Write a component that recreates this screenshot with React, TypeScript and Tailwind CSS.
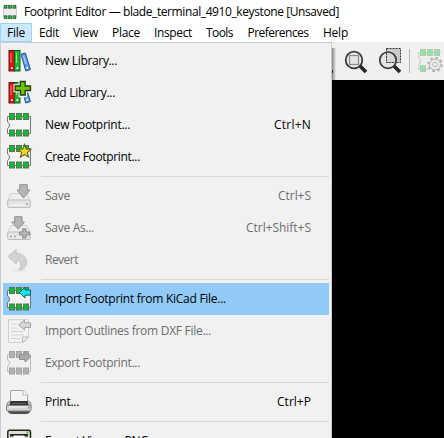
import { useLayoutEffect, useRef, useState, type ReactNode } from "react";

/** Text whose tracking is adjusted so that it spans a given width. */
function Fit({ text, width }: { text: string; width: number }) {
  const ref = useRef<HTMLSpanElement>(null);
  const [spacing, setSpacing] = useState(0);
  useLayoutEffect(() => {
    const el = ref.current;
    if (!el) return;
    setSpacing((width - el.getBoundingClientRect().width) / text.length);
  }, [text, width]);
  return (
    <span ref={ref} className="inline-block whitespace-pre" style={{ letterSpacing: `${spacing}px` }}>
      {text}
    </span>
  );
}

function Svg({ children, size = 24 }: { children: ReactNode; size?: number }) {
  return (
    <svg width={size} height={size} viewBox="0 0 24 24" className="block shrink-0 overflow-visible" fill="none">
      {children}
    </svg>
  );
}

function Chip({ pad = "#0cbc2a", line = "#777777", body = "#f4f4f4", edge = "#5f6f62" }) {
  return (
    <>
      <path d="M.5 3.5H23.5V20.5H.5V15.5L2.3 14V10.5L.5 9Z" fill={body} stroke={line} strokeWidth="1" />
      {[2.5, 9.5, 16.5].map((x) => (
        <g key={x} fill={pad} stroke={edge} strokeWidth="1">
          <rect x={x} y="0.5" width="5" height="6" />
          <rect x={x} y="17" width="5" height="6" />
        </g>
      ))}
    </>
  );
}

function Books() {
  return (
    <>
      <rect x="2" y="1.5" width="5.5" height="20.5" fill="#df1010" stroke="#651515" />
      <rect x="7.5" y="1.5" width="5.5" height="20.5" fill="#20b52c" stroke="#145b20" />
      <path d="M14 5.2 18.4 4 23.4 20.5 18.8 22Z" fill="#5c9cf2" stroke="#294f91" />
      <path d="M4 4V14" stroke="#ff8585" />
      <path d="M9.5 4V14" stroke="#8cf38c" />
      <path d="M16.5 7 19 15" stroke="#b8dcff" />
      <circle cx="4.8" cy="19" r="1" fill="#fff" />
      <circle cx="10.3" cy="19" r="1" fill="#fff" />
      <circle cx="20.2" cy="18.7" r="1" fill="#fff" />
    </>
  );
}

function Disk() {
  return (
    <>
      <path d="M4 9.5H20L23.3 17H.7Z" fill="#ededed" stroke="#cecece" />
      <rect x=".7" y="16" width="22.6" height="7.5" rx="1" fill="#e4e4e4" stroke="#bdbdbd" />
      <path d="M2.5 21H18" stroke="#f7f7f7" />
    </>
  );
}

function Printer() {
  return (
    <>
      <path d="M1 20H23V22Q22 24 19 24H5Q2 24 1 22Z" fill="#4c4c4c" />
      <path d="M0 13 4 10H20L24 13V18H0Z" fill="#bdbdbd" stroke="#969696" />
      <path d="M3.5 13.5V.5H16L20.5 5V13.5Z" fill="#f4f4f4" stroke="#a5a5a5" />
      <path d="M16 .7V5H20.5" fill="#fff" stroke="#b5b5b5" />
      <path d="M3.5 11H20.5L21.5 15.5H2.5Z" fill="#343434" />
      <path d="M5 13.5H19" stroke="#606060" />
      <path d="M-.5 15.5H24V20Q24 21 22.5 21H1Q-.5 21-.5 20Z" fill="#d3d3d3" stroke="#858585" />
      <path d="M2 17H20" stroke="#f5f5f5" />
      <rect x="21" y="17" width="1.5" height="1.5" fill="#4ccd28" />
    </>
  );
}

const icons: Record<string, ReactNode> = {
  books: <Books />,
  addBooks: (
    <>
      <Books />
      <path d="M13.3 .5H18.2V5H23.5V9.5H18.2V14.5H13.3V9.5H8.2V5H13.3Z" fill="#6dc500" stroke="#f4f4f4" strokeWidth="3.5" />
      <path d="M13.3 .5H18.2V5H23.5V9.5H18.2V14H13.3V9.5H8.2V5H13.3Z" fill="#6dc500" stroke="#243610" strokeWidth="1.3" />
    </>
  ),
  chip: <Chip />,
  star: (
    <>
      <Chip />
      <path d="M17.5-.5 19.2 4 24 4.3 20.4 7.6 21.6 12 17.5 9.6 13.4 12 14.6 7.6 11 4.3 15.8 4Z" fill="#e9dc20" stroke="#6a601e" strokeWidth="1.1" />
    </>
  ),
  save: (
    <>
      <Disk />
      <rect x="19" y="19.3" width="2" height="1.5" fill="#aaa" />
      <path d="M12.7 .7H20.3V6H23L16.5 14 10 6H12.7Z" fill="#b5b5b5" stroke="#929292" />
    </>
  ),
  saveAs: (
    <>
      <Disk />
      <path d="M3 20.5H5M7 20.5H9" stroke="#a8a8a8" strokeWidth="1.5" />
      <path d="M7.7 .7H15V6H17.5L11.3 13 4.8 6H7.7Z" fill="#b5b5b5" stroke="#929292" />
      <path d="M15.7 12.7H19V16H22.5V19H19V22H15.7V19H12.5V16H15.7Z" fill="#b6b6b6" stroke="#8d8d8d" />
    </>
  ),
  revert: (
    <>
      <ellipse cx="13" cy="22.3" rx="7" ry="1.5" fill="#e7e7e7" />
      <path d="M1 8.5 9.2 1.5V5.5C16 5.5 19.5 9.5 19.5 14.5 19.5 18.5 16.5 21.5 12 22 15.5 17.5 14 12.5 9.2 12.5V16Z" fill="#d3d3d3" stroke="#c3c3c3" />
    </>
  ),
  importChip: (
    <>
      <Chip line="#667482" />
      <path d="M12.5 5.5 18 .3V3H23.5V8.2H18V11Z" fill="#00efff" stroke="#245b69" />
    </>
  ),
  dxf: (
    <>
      <path d="M1.5 .7H21.5V18.5L16.5 23.5H1.5Z" fill="#f3f3f3" stroke="#d0d0d0" />
      <path d="M15.5 23.5V18H21.5Z" fill="#eee" stroke="#bbb" />
      <path d="M4 5H10M4 9H10M4 12.5H16M4 16H17M4 19.5H13" stroke="#d4d4d4" />
      <path d="M11.7 6 17.5 1V3.8H23.5V8.5H17.5V11Z" fill="#d6d6d6" stroke="#a4a4a4" />
    </>
  ),
  exportChip: (
    <>
      <Chip pad="#b2b2b2" line="#bcbcbc" edge="#a3a3a3" body="#f0f0f0" />
      <path d="M12.5 3.5H18V.7L23.7 5.7 18 11V8.5H12.5Z" fill="#aaa" stroke="#8d8d8d" />
    </>
  ),
  print: <Printer />,
  plot: (
    <>
      <rect x=".8" y="1.2" width="22.7" height="20" rx="2" fill="#deded6" stroke="#25251f" strokeWidth="1.5" />
      <rect x="3" y="5" width="18" height="2.5" fill="#222" />
      <path d="M6.5 6.5H17.5V20H6.5Z" fill="#fafafa" />
      <rect x="19.5" y="2.5" width="2" height="2" fill="#32df17" />
    </>
  ),
};

type Entry = { icon: string; text: string; w: number; kw?: number; shortcut?: string; state?: "off" | "hot" };

const groups: Entry[][] = [
  [
    { icon: "books", text: "New Library...", w: 72 },
    { icon: "addBooks", text: "Add Library...", w: 70 },
    { icon: "chip", text: "New Footprint...", w: 85, shortcut: "Ctrl+N", kw: 37 },
    { icon: "star", text: "Create Footprint...", w: 95 },
  ],
  [
    { icon: "save", text: "Save", w: 25, shortcut: "Ctrl+S", kw: 33, state: "off" },
    { icon: "saveAs", text: "Save As...", w: 49, shortcut: "Ctrl+Shift+S", kw: 65, state: "off" },
    { icon: "revert", text: "Revert", w: 33, state: "off" },
  ],
  [
    { icon: "importChip", text: "Import Footprint from KiCad File...", w: 181, state: "hot" },
    { icon: "dxf", text: "Import Outlines from DXF File...", w: 166, state: "off" },
    { icon: "exportChip", text: "Export Footprint...", w: 95, state: "off" },
  ],
  [{ icon: "print", text: "Print...", w: 34, shortcut: "Ctrl+P", kw: 34 }],
  [{ icon: "plot", text: "Export View as PNG...", w: 112 }],
];

function Row({ icon, text, w, kw, state, shortcut }: Entry) {
  const tone = state === "off" ? "text-[#6d6d6d]" : "text-black";
  const bg = state === "hot" ? "bg-[#91c9f7]" : "";
  return (
    <div className={`flex h-8 shrink-0 items-center pl-1 pr-[18px] ${tone} ${bg}`}>
      <Svg>{icons[icon]}</Svg>
      <div className="ml-3.5 flex-1 leading-8">
        <Fit text={text} width={w} />
      </div>
      {shortcut && <Fit text={shortcut} width={kw ?? 34} />}
    </div>
  );
}

const menus: [string, number, number][] = [
  ["File", 18, 32],
  ["Edit", 20, 34],
  ["View", 25, 39],
  ["Place", 28, 42],
  ["Inspect", 38, 52],
  ["Tools", 27, 41],
  ["Preferences", 61, 76],
  ["Help", 25, 39],
];

export default function App() {
  return (
    <div className="relative flex h-[438px] w-[444px] flex-col overflow-hidden bg-black font-['Open_Sans','Noto_Sans',sans-serif] text-[12px] text-black">
      <header className="flex h-[23px] shrink-0 items-center bg-white pl-[3px]">
        <Svg size={14}>
          <rect x="0" y="2" width="24" height="20" fill="#ededed" />
          <path d="M1 4V20M23 4V20" stroke="#aaa" strokeWidth="1.4" strokeDasharray="2 1" />
          {[2, 9.5, 17].map((x) => (
            <g key={x} fill="#16bd32" stroke="#34533a" strokeWidth="1.2">
              <rect x={x} y="0.5" width="5" height="5" />
              <rect x={x} y="18.5" width="5" height="5" />
            </g>
          ))}
        </Svg>
        <div className="ml-[7px] leading-[23px]">
          <Fit text="Footprint Editor — blade_terminal_4910_keystone [Unsaved]" width={315} />
        </div>
      </header>
      <nav className="flex h-[19px] shrink-0 bg-white">
        {menus.map(([name, w, box], i) => (
          <div
            key={name}
            className={`flex h-[19px] items-center justify-center leading-[19px] ${i === 0 ? "bg-[#cce8ff] outline outline-1 -outline-offset-1 outline-[#99d1ff]" : ""}`}
            style={{ width: box }}
          >
            <Fit text={name} width={w} />
          </div>
        ))}
      </nav>
      <div className="flex h-[38px] shrink-0 items-center bg-[#f0f0f0] pl-[344px]">
        <Svg>
          <path d="M16 17 22 23" stroke="#292929" strokeWidth="3.8" />
          <circle cx="10" cy="11" r="8.3" fill="#eaeaea" stroke="#3b3b3b" strokeWidth="1.8" />
          <rect x="5.5" y="6.5" width="9" height="9" fill="#e4e4e4" stroke="#8b8b8b" strokeWidth="1.3" />
        </Svg>
        <div className="ml-2.5">
          <Svg>
            <path d="M8.5-.5H22.5V13.5H8.5Z" fill="#cacaca" stroke="#333" strokeDasharray="2 1" />
            <path d="M16 17 22 23" stroke="#292929" strokeWidth="3.8" />
            <circle cx="10" cy="11.2" r="8.2" fill="#ddd" fillOpacity=".65" stroke="#3b3b3b" strokeWidth="1.7" />
            <path d="M8.5 4V13.5H18" stroke="#444" strokeDasharray="2 1" />
          </Svg>
        </div>
        <div className="ml-[7px] h-6 w-px bg-[#b5b5b5]" />
        <div className="ml-[8px]">
          <Svg>
            <path d="M23 3.5H.8V9L2.4 10.5V14L.8 15.2V20.5H10" stroke="#c6c6c6" />
            {[2.5, 9.5, 16.5].map((x) => (
              <rect key={x} x={x} y=".5" width="5" height="6" fill="#90e5a0" stroke="#b5c9b8" />
            ))}
            <rect x="2.5" y="16.5" width="5" height="6" fill="#90e5a0" stroke="#b5c9b8" />
            <circle cx="17" cy="15.5" r="6.8" stroke="#b3b3b3" strokeWidth="2" strokeDasharray="2.8 2.54" />
            <circle cx="17" cy="15.5" r="5.4" fill="#ededed" stroke="#b3b3b3" />
            <circle cx="17" cy="15.5" r="2.2" fill="#f0f0f0" stroke="#b3b3b3" />
          </Svg>
        </div>
      </div>
      <div className="absolute left-[332px] top-[48px] h-8 w-[4px] bg-gradient-to-r from-[#858585] to-[#f0f0f0]" />
      <div className="absolute left-[332px] top-[70px] h-[3px] w-px bg-[#252525]" />
      <div className="absolute left-0 top-[42px] flex h-[410px] w-[332px] flex-col border border-[#cccccc] bg-[#f1f1f1] p-0.5">
        {groups.map((group, i) => (
          <div key={i} className="shrink-0">
            {i > 0 && (
              <div className="flex h-[7px] items-center pl-[38px]">
                <div className="h-px w-full bg-[#d7d7d7]" />
              </div>
            )}
            {group.map((entry) => (
              <Row key={entry.text} {...entry} />
            ))}
          </div>
        ))}
      </div>
    </div>
  );
}
